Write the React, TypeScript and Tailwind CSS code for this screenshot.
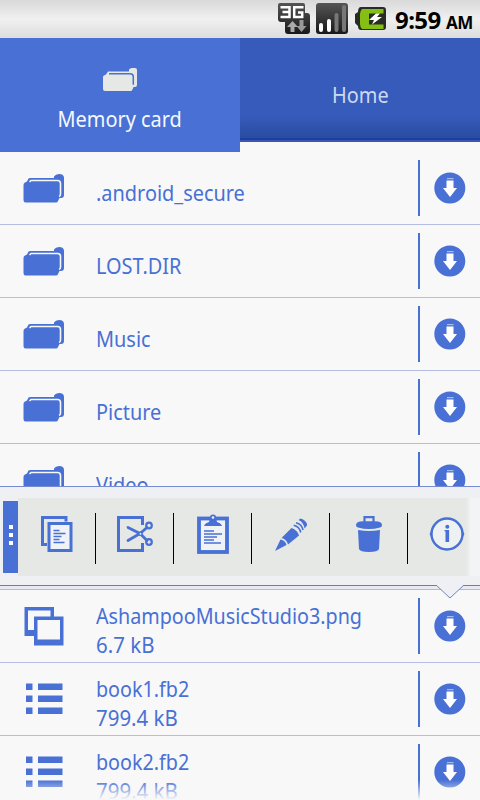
import type { ReactNode } from "react";

const folders = [".android_secure", "LOST.DIR", "Music", "Picture", "Video"];

const files = [
  { name: "AshampooMusicStudio3.png", size: "6.7 kB", type: "image" },
  { name: "book1.fb2", size: "799.4 kB", type: "text" },
  { name: "book2.fb2", size: "799.4 kB", type: "text" },
];

const FolderIcon = ({ className }: { className: string }) => (
  <svg viewBox="0 0 42 29" className={className} fill="currentColor">
    <path d="M2 8.500 4 7.500 5.500 4.500Q6 4 7.500 4H31V2.500Q32.500 0 36 0q5 0 5 4v17q0 3-3 3h-1.500l-1.500 3q-.5 1.500-2 1.500H2.500Q.5 28.500.5 26V11Q.5 9 2 8.500Z" />
    <path d="M6.500 8 8 6.500H34.500q3 0 3 3V20q0 2-1.500 2.500" fill="none" stroke="#f8f8f8" strokeWidth="1.600" />
  </svg>
);

const TabFolderIcon = () => (
  <svg viewBox="0 0 34 23" width="34" height="23" className="text-[#e5e8e5]">
    <path fill="currentColor" d="M1 7.500 3 6.500 5 3.500H26V1.500Q27 0 29 0h3q2 0 2 2v15q0 2-2 2h-1.500l-1 2.500q-.5 1.500-2 1.500H2Q0 23 0 21V9Q0 8 1 7.500Z" />
    <path d="M6 5.700h21q3.300 0 3.300 3v8" fill="none" stroke="#4870d5" strokeWidth="1.500" />
  </svg>
);

const ImageIcon = () => (
  <svg viewBox="0 0 40 39" width="40" height="39" className="ml-px">
    <path d="M.5 0H30v10h-3.500V3.500H4v19.500h6v6H.5Z" fill="#4870d5" />
    <path d="M10 9.500h29.500V38.500H10Zm3.500 3.500v19.500H36V13Z" fill="#4870d5" fillRule="evenodd" />
  </svg>
);

const ListIcon = () => (
  <svg viewBox="0 0 37 32" width="37" height="32" fill="#4870d5" className="ml-[3px]">
    {[0.5, 12.5, 24.5].map((y) => (
      <g key={y}>
        <rect x="0" y={y} width="6.500" height="6.500" />
        <rect x="12" y={y} width="24.500" height="6.500" />
      </g>
    ))}
  </svg>
);

const DownIcon = () => (
  <svg viewBox="0 0 32 32" width="32" height="32">
    <circle cx="15.800" cy="16" r="15.500" fill="#4870d5" />
    <path d="M12.500 8.500h7V16H23l-7 9L9 16h3.500Z" fill="white" />
    <path d="M13 6.700h6.500" stroke="white" opacity=".65" />
  </svg>
);

const CopyIcon = () => (
  <svg viewBox="0 0 32 36" width="32" height="36">
    <path d="M25 5.500V1.500H1.500V28.500H6" fill="none" stroke="#4870d5" strokeWidth="3" />
    <rect x="8" y="7.500" width="22" height="27" fill="#f0f3f5" stroke="#4870d5" strokeWidth="3" />
    <path d="M12.500 14.500h6M12.500 17.500h12M12.500 20.500h8M12.500 23.500h6M12.500 26.500h11" stroke="#4870d5" strokeWidth="1.300" />
  </svg>
);

const CutIcon = () => (
  <svg viewBox="0 0 38 36" width="38" height="36" fill="none" stroke="#4870d5">
    <path d="M26.500 9V1.500H2.500V34.500H26.500V27" strokeWidth="3" />
    <path d="m12 11.500 12 6 7-6M12 24.500l12-7 7 7" strokeWidth="2.800" strokeLinecap="round" />
    <circle cx="33" cy="9.500" r="2.800" strokeWidth="2.200" />
    <circle cx="33" cy="26" r="2.800" strokeWidth="2.200" />
    <circle cx="24.500" cy="17.800" r="2.300" fill="#4870d5" stroke="none" />
    <circle cx="24.500" cy="17.800" r=".9" fill="white" stroke="none" />
  </svg>
);

const PasteIcon = () => (
  <svg viewBox="0 0 32 40" width="32" height="40">
    <rect x="2" y="4.500" width="28" height="33.500" fill="#f0f3f5" stroke="#4870d5" strokeWidth="3.800" />
    <path d="M7 12q1-3 5-4 1-5 4-5t4 5q4 1 5 4Z" fill="#4870d5" />
    <circle cx="16" cy="3.500" r="2.200" fill="#f0f3f5" stroke="#4870d5" strokeWidth="1.700" />
    <path d="M7 17h10M7 20h18M7 23h13M7 26h10M7 29h17" stroke="#4870d5" strokeWidth="1.400" />
  </svg>
);

const PencilIcon = () => (
  <svg viewBox="0 0 32 33" width="32" height="33" fill="#4870d5">
    <path d="M0 33 5.500 21.500Q10.500 22.500 11.500 27Z" />
    <path d="m6.500 20 10-10q6 2 7.500 7.500L13 26.500Q11.500 21 6.500 20Z" />
    <path d="m23.500 2 2-1.500q5.500 1.500 7 6.500l-3 3.500Q28.500 4 23.500 2Z" />
    <path d="M21 4.700q6 1.500 7 7.300M18.700 7.200q6 1.500 7 7.300" fill="none" stroke="#4870d5" strokeWidth="1.600" />
  </svg>
);

const TrashIcon = () => (
  <svg viewBox="0 0 26 36" width="26" height="36" fill="#4870d5">
    <path d="M8.500 6V1.200h9V6" fill="none" stroke="#4870d5" strokeWidth="2.200" />
    <path d="M0 9q0-3.500 7-3.800h12Q26 5.500 26 9q0 2-2 2.500-11 3-22 0Q0 11 0 9Z" />
    <path d="M2 14q11 2 22 0l-1 19q-1 3-10 3T3 33Z" />
  </svg>
);

const InfoIcon = () => (
  <svg viewBox="0 0 36 36" width="36" height="36">
    <circle cx="18" cy="18" r="15.500" fill="#eef1f2" stroke="#4870d5" strokeWidth="2.400" />
    <path d="M15.500 14h4.600v12H16.500V15.300h-1Z" fill="#4870d5" />
    <circle cx="18.300" cy="10.700" r="2" fill="#4870d5" />
    <path d="M.5 18 2.500 15v6ZM35.500 18l-2-3v6Z" fill="#4870d5" />
  </svg>
);

const Row = ({ icon, children }: { icon: ReactNode; children: ReactNode }) => (
  <div className="flex h-[73px] shrink-0 border-b border-[#b5bee0]">
    <div className="flex w-24 shrink-0 items-center pl-[23px]">{icon}</div>
    <div className="flex-1 whitespace-nowrap text-[22px] leading-[29px]">{children}</div>
    <div className="mt-2 h-14 w-0.5 bg-[#4870d5]" />
    <div className="flex w-[60px] items-center pl-[14px]">
      <DownIcon />
    </div>
  </div>
);

const Tool = ({ children }: { children: ReactNode }) => (
  <div className="flex w-[78px] shrink-0 items-center justify-center pb-1.5">{children}</div>
);

const Divider = () => <div className="mt-[15px] -ml-px h-[51px] w-px shrink-0 bg-black" />;

const StatusBar = () => (
  <div className="flex h-[38px] items-start bg-linear-to-b from-[#d8d9d8] via-[#eff0ef] to-[#dcdddc] pl-[277px] text-black">
    <svg viewBox="0 0 110 38" width="110" height="38" className="shrink-0">
      <defs>
        <linearGradient id="dark" x2="0" y2="1">
          <stop stopColor="#555" />
          <stop offset="1" stopColor="#181818" />
        </linearGradient>
      </defs>
      <path d="M3 3h23q2 0 2 2v8h2q3 0 3 3v15q0 3-3 3H11q-3 0-3-3V22H4q-3 0-3-3V5q0-2 2-2Z" fill="url(#dark)" />
      {/* 3G badge */}
      <path d="M3.500 7.200H12.500V17H3.500M5.500 12h7M26.500 7.200H17.200V17h8v-4.500H21" fill="none" stroke="white" strokeWidth="2.500" />
      <path d="m15.500 21-5.500 6h3.500v5h4v-5H21Z" fill="#aaa" />
      <path d="M22.500 20v6h-3l5 6 5-6h-3v-6Z" fill="#999" />
      <rect x="39" y="3" width="32" height="31" rx="3" fill="url(#dark)" />
      <g strokeWidth="4" strokeLinecap="round">
        <path d="M44 25v5M52 21v9" stroke="white" />
        <path d="M59.500 15v15M67 7v23" stroke="#777" />
      </g>
      <path d="M84 7h22q3 0 3 3v17q0 3-3 3H84q-3 0-3-4l-3-3v-9l3-2q0-5 3-5Z" fill="#292c24" />
      <path d="M85 9h21.500v4.500H92v11h14.500v4.500H85q-2-2-2-5V14q0-3 2-5Z" fill="#86bf14" />
      <path d="m99 13.500-7 6.500h5l-2 4.500 10-7.500h-5l3-3.500Z" fill="white" />
    </svg>
    <div className="ml-2 flex items-baseline whitespace-nowrap font-bold">
      <span className="w-[51px] text-[24px] leading-[39px] tracking-[-0.6px]">9:59</span>
      <span className="text-[17px] tracking-[-0.6px]">AM</span>
    </div>
  </div>
);

const Tabs = () => (
  <div className="flex h-[114px] text-[22px]">
    <div className="flex w-60 flex-col items-center bg-[#4870d5] pt-[30px] text-[#f4f8ff]">
      <TabFolderIcon />
      <span className="mt-3 origin-center scale-x-[0.905] leading-[30px]">Memory card</span>
    </div>
    <div className="flex h-[104px] w-60 items-center justify-center border-b-2 border-[#4055b5] bg-linear-to-b from-[#375bbb] from-75% to-[#274b9f] pt-2.5 text-[#ccd9f0] shadow-[inset_0_-2px_#1c3fa2]">
      <span className="origin-center scale-x-[0.905]">Home</span>
    </div>
  </div>
);

const Toolbar = () => (
  <div className="relative z-10 h-[104px] border-t border-[#778bd0] bg-[#eff0f3]">
    <div className="flex h-[89px] items-center pt-[11px]">
      <div className="ml-[3px] flex h-[72px] w-[15px] shrink-0 flex-col items-center justify-center gap-1 bg-[#4870d5] pb-1">
        <i className="size-1 bg-white" />
        <i className="size-1 bg-white" />
        <i className="size-1 bg-white" />
      </div>
      <div className="flex h-[78px] flex-1 overflow-hidden bg-linear-to-r from-[#e5e8e5] from-[97%] to-[#f3f4f5] to-[98%]">
        <Tool><CopyIcon /></Tool>
        <Divider />
        <Tool><CutIcon /></Tool>
        <Divider />
        <Tool><PasteIcon /></Tool>
        <Divider />
        <Tool><PencilIcon /></Tool>
        <Divider />
        <Tool><TrashIcon /></Tool>
        <Divider />
        <Tool><InfoIcon /></Tool>
      </div>
    </div>
    <div className="mt-[9px] h-[5px] border-y border-t-[#637bc9] border-b-[#aebbdd] bg-[#e7eaf4]" />
    <svg viewBox="0 0 30 15" width="30" height="15" className="absolute left-[435px] top-[97px]">
      <path d="M0 0h30L15 14Z" fill="#eff0f3" />
      <path d="m1 1 14 13L29 1" fill="none" stroke="#7384bd" />
    </svg>
  </div>
);

export default function App() {
  return (
    <div className="relative h-[800px] w-[480px] overflow-hidden bg-[#f8f8f8] font-['Noto_Sans',sans-serif] text-[#4870d5]">
      <StatusBar />
      <Tabs />
      <div className="h-[334px] overflow-hidden">
        {folders.map((name) => (
          <Row key={name} icon={<FolderIcon className="h-[29px] w-[42px]" />}>
            <span className="mt-[26px] block origin-left scale-x-[0.905]">{name}</span>
          </Row>
        ))}
      </div>
      <Toolbar />
      <div className="h-[210px] overflow-hidden">
        {files.map((file) => (
          <Row key={file.name} icon={file.type === "image" ? <ImageIcon /> : <ListIcon />}>
            <p className="mt-[11px] origin-left scale-x-[0.896]">{file.name}</p>
            <p className="origin-left scale-x-[0.93]">{file.size}</p>
          </Row>
        ))}
      </div>
      <div className="absolute bottom-0 left-0 h-5 w-full bg-linear-to-b from-transparent to-[#f8f8f8]" />
    </div>
  );
}
